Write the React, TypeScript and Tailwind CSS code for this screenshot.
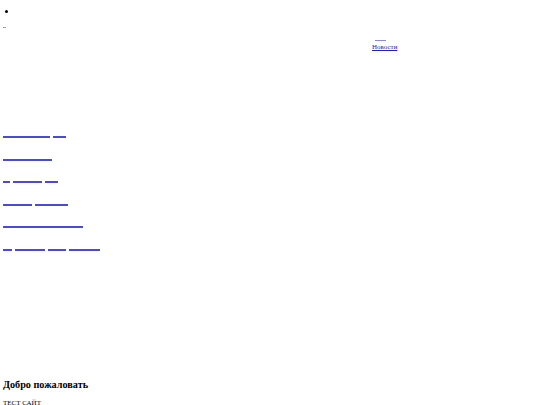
const rows: number[][] = [
  [47, 13],
  [49],
  [7, 29, 13],
  [29, 33],
  [80],
  [9, 30, 18, 31],
];

const words = ["Главная", "О нас", "Услуги", "Контакты", "Каталог", "Форум", "Блог", "Статьи"];

export default function App() {
  return (
    <div className="w-[540px] h-[405px] overflow-hidden bg-white font-['Liberation_Serif',serif] text-black">
      <ul className="list-disc pl-[17px] pt-[5px] text-[9px] leading-[12px]">
        <li>&nbsp;</li>
      </ul>
      <div className="pl-[3px] pt-[5px] h-[12px] text-[7px] leading-[8px]">
        <a href="#" className="inline-block w-[3px] h-[6px] border-b border-[#9999cc]"></a>
      </div>
      <div className="flex flex-col items-start pl-[372px] pt-[11px]">
        <a href="#" className="ml-[3px] inline-block w-[11px] h-[1px] bg-[#8888dd]"></a>
        <a href="#" className="mt-[2px] text-[7px] leading-[9px] text-[#2222bb] underline">Новости</a>
      </div>
      <nav className="pt-[84px] pl-[3px] flex flex-col gap-[21.6px]">
        {rows.map((row, i) => (
          <div key={i} className="flex gap-[3px] h-[1px]">
            {row.map((w, j) => (
              <a
                key={j}
                href="#"
                className="block h-[2px] bg-[#4a4ad8] text-transparent text-[1px] overflow-hidden"
                style={{ width: w }}
              >
                {words[(i + j) % words.length]}
              </a>
            ))}
          </div>
        ))}
      </nav>
      <h1 className="mt-[128px] pl-[3px] text-[10.2px] leading-[14px] font-bold">Добро пожаловать</h1>
      <p className="pl-[3px] pt-[7px] text-[7px] leading-[9px]">ТЕСТ САЙТ</p>
    </div>
  );
}
